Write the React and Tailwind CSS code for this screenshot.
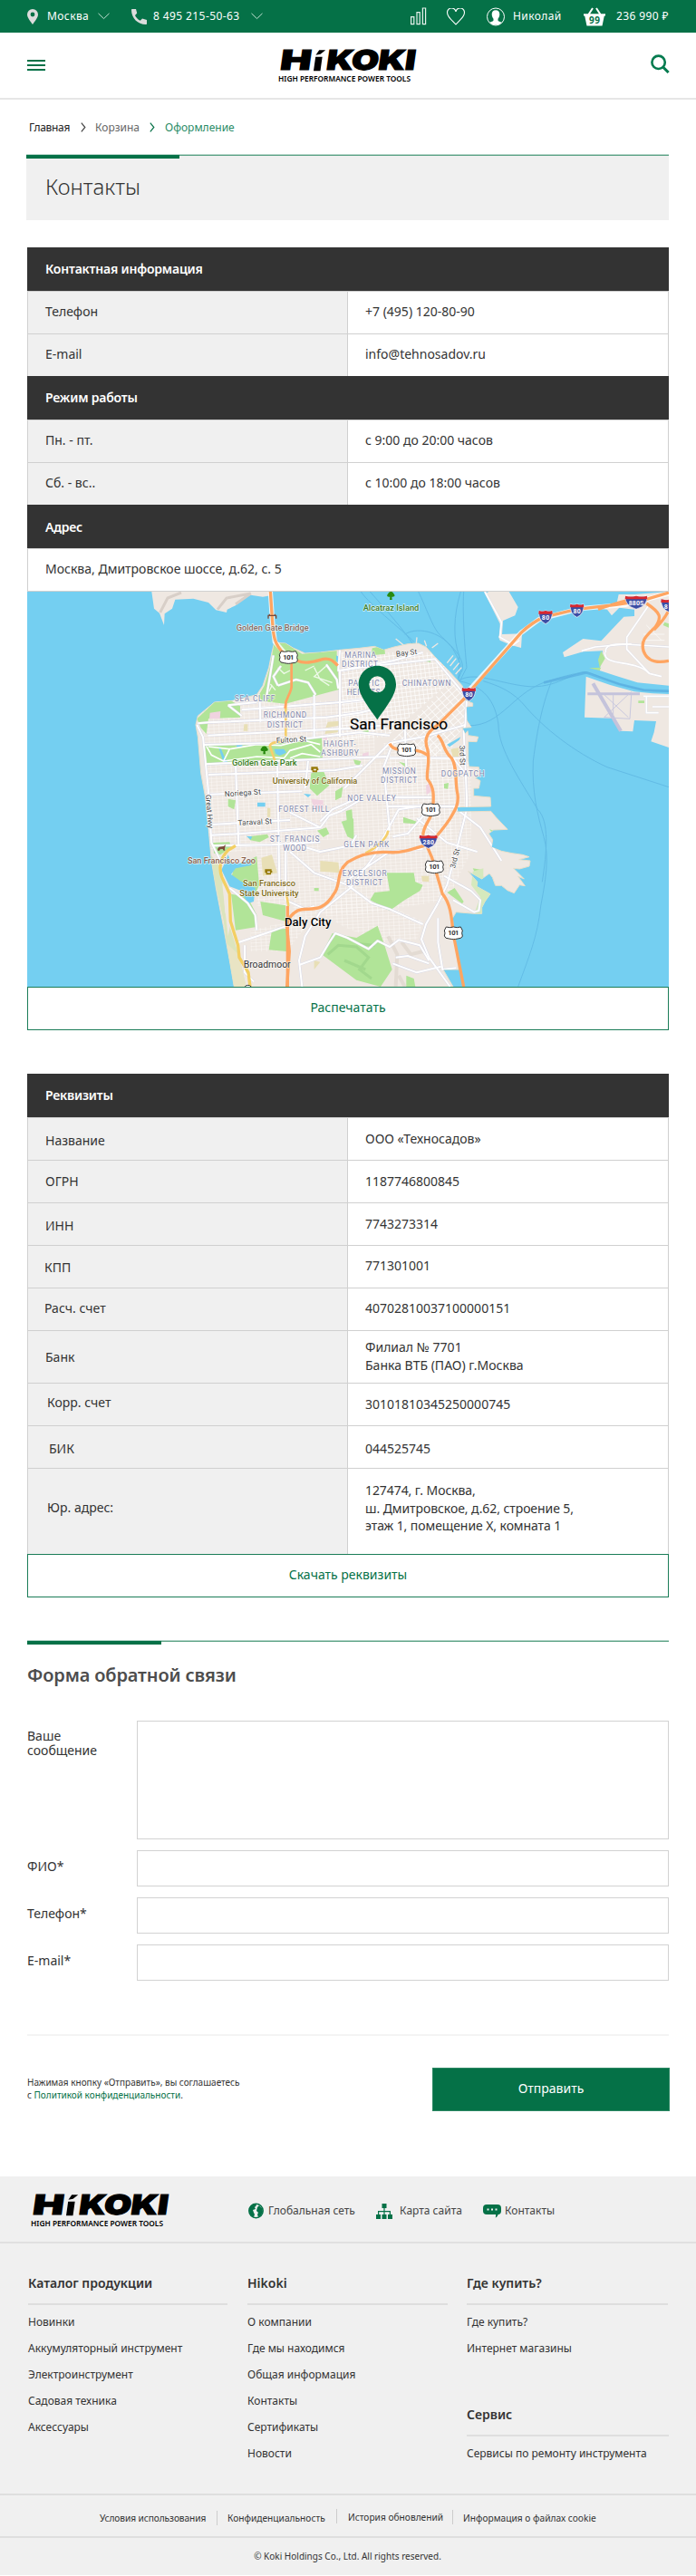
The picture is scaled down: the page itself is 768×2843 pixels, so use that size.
import React from 'react';

const FONT = "font-['Noto_Sans',sans-serif]";

function Logo() {
  return (
    <svg width="154" height="38" viewBox="0 0 154 38" className="block overflow-visible">
      <g transform="translate(1 24.3) skewX(-8)">
        <text y="-1" fontFamily="Inter, sans-serif" fontWeight="900" fontSize="30" stroke="#000" strokeWidth="1.2">
          <tspan x="0" textLength="34" lengthAdjust="spacingAndGlyphs">H</tspan>
        </text>
        <path d="M38 0 38 -15.500 45.500 -15.500 45.500 0ZM38 -17.500 41 -23 48 -23 43 -18.500Z" />
        <text y="-1" fontFamily="Inter, sans-serif" fontWeight="900" fontSize="30" stroke="#000" strokeWidth="1.2">
          <tspan x="51" textLength="98" lengthAdjust="spacingAndGlyphs">KOKI</tspan>
        </text>
      </g>
      <text x="0" y="36.2" fontFamily="Noto Sans, sans-serif" fontWeight="600" fontSize="8.6" textLength="146" lengthAdjust="spacingAndGlyphs">
        HIGH PERFORMANCE POWER TOOLS
      </text>
    </svg>
  );
}

function Chevron() {
  return (
    <svg width="13" height="8" viewBox="0 0 13 8" className="block" fill="none" stroke="#bfe0d2" strokeWidth="1">
      <path d="M.5 .8 6.5 6.6 12.5 .8" />
    </svg>
  );
}

function TopBar() {
  return (
    <div className="flex h-9 items-center bg-[#057147] pr-[30px] pl-[30px] text-xs tracking-[0.4px] text-white">
      <svg width="12" height="17" viewBox="0 0 12 17" className="block" fill="#dcdcdc">
        <path fillRule="evenodd" d="M6 0a6 6 0 0 1 6 6c0 3.500-3.600 7.500-6 11C3.600 13.500 0 9.500 0 6a6 6 0 0 1 6-6Zm0 3.600a2.400 2.400 0 1 0 0 4.800 2.400 2.400 0 0 0 0-4.800Z" />
      </svg>
      <span className="ml-[10px] w-14">Москва</span>
      <Chevron />
      <svg width="17" height="17" viewBox="0 0 17 17" className="ml-6 block" fill="#dcdcdc">
        <path d="M1 0h4l1.200 4.500L4 7c1.200 2.500 3 4.500 5.800 5.800L12 10.600l5 1.400v4c0 .6-.4 1-1 1C7 17 0 10 0 1c0-.6.4-1 1-1Z" />
      </svg>
      <span className="ml-[7px] w-[108px] whitespace-nowrap">8 495 215-50-63</span>
      <Chevron />
      <div className="ml-auto flex items-center">
        <svg width="18" height="20" viewBox="0 0 18 20" className="block" fill="none" stroke="#e6f1ec" strokeWidth="1.200">
          <path d="M.6 10.600h3.200v8H.6zM7 5.600h3.200v13H7zM13.400 1h3.200v17.600h-3.200z" />
        </svg>
        <svg width="20" height="19" viewBox="0 0 20 19" className="ml-[22px] block" fill="none" stroke="#fff" strokeWidth="1.100">
          <path d="M10 18C6 13.500 .6 9.500 .6 5.400A4.700 4.700 0 0 1 10 3.800 4.700 4.700 0 0 1 19.400 5.400C19.400 9.500 14 13.500 10 18Z" />
        </svg>
        <svg width="20" height="21" viewBox="0 0 20 21" className="ml-6 block">
          <circle cx="10" cy="10.500" r="9.500" fill="none" stroke="#fff" />
          <path fill="#fff" d="M10 3.200c3 0 4.300 2 4.300 4.600 0 2.200-.8 3.800-1.800 4.900v1.700c0 1 3.200 1.400 4 2.500A9 9 0 0 1 10 19.600a9 9 0 0 1-6.500-2.700c.8-1.100 4-1.500 4-2.500v-1.700c-1-1.100-1.800-2.700-1.800-4.900 0-2.600 1.300-4.600 4.300-4.600Z" />
        </svg>
        <span className="ml-[9px] w-[78px]">Николай</span>
        <svg width="24" height="21" viewBox="0 0 24 21" className="block">
          <path d="M5.500 8 10 1M18.500 8 14 1" stroke="#fff" strokeWidth="2" fill="none" />
          <path fill="#fff" d="M0 7.200h24v2.200h-1.200L20.500 20.500h-17L1.200 9.400H0z" />
          <text x="12.200" y="17.600" textAnchor="middle" fontFamily="Noto Sans, sans-serif" fontWeight="700" fontSize="10" fill="#057147">99</text>
        </svg>
        <span className="ml-3 w-[58px] whitespace-nowrap">236 990 ₽</span>
      </div>
    </div>
  );
}

function Header() {
  return (
    <div className="flex h-[74px] items-start justify-between border-b-2 border-[#e6e6e6] pr-[29px] pl-[30px]">
      <div className="mt-[30px] flex w-[20px] flex-col gap-[3px]">
        <div className="h-[2px] bg-[#057147]" />
        <div className="h-[2px] bg-[#057147]" />
        <div className="h-[2px] bg-[#057147]" />
      </div>
      <div className="mt-[18px]"><Logo /></div>
      <svg width="21" height="21" viewBox="0 0 21 21" className="mt-6 block" fill="none" stroke="#057b4f" strokeWidth="2.600">
        <circle cx="8.600" cy="8.800" r="7.200" />
        <path d="m13.600 14 6 6" strokeWidth="3" />
      </svg>
    </div>
  );
}

function Crumb({ color }) {
  return (
    <svg width="6" height="11" viewBox="0 0 6 11" className={'block ' + color} fill="none" stroke="currentColor" strokeWidth="1.200">
      <path d="m.8 .6 4 4.900-4 4.900" />
    </svg>
  );
}

function Accent({ bar }) {
  return (
    <div className="h-[5px] bg-[linear-gradient(#b4d5c8_0_1px,#5aa184_1px_2px,transparent_2px)]">
      <div className={'relative top-px h-[4px] bg-[#057147] ' + bar} />
    </div>
  );
}

function Dark({ children, pb = 'pb-px' }) {
  return (
    <div className={'flex h-12 items-center bg-[#333] pl-5 text-sm font-semibold tracking-[-0.2px] text-white ' + pb}>{children}</div>
  );
}

function Row({ label, children }) {
  return (
    <div className="flex h-[47px] border-x border-t border-[#d0d0d0] text-sm leading-5">
      <div className="flex w-[353px] items-center border-r border-[#d0d0d0] bg-[#f0f0f0] pb-[2px] pl-[19px]">{label}</div>
      <div className="flex items-center pb-[2px] pl-[19px]">{children}</div>
    </div>
  );
}

function Outline({ children, nudge }) {
  return (
    <button className={'flex h-12 w-full items-center justify-center border border-[#1a7c57] text-sm text-[#057147] ' + nudge}>{children}</button>
  );
}

const requisites = [
  { h: 'h-[47px]', l: 'Название', lp: 'pl-[19px] pt-[15px]', v: ['ООО «Техносадов»'], vp: 'pt-[13px]' },
  { h: 'h-[47px]', l: 'ОГРН', lp: 'pl-[19px] pt-[13px]', v: ['1187746800845'], vp: 'pt-[13px]' },
  { h: 'h-[47px]', l: 'ИНН', lp: 'pl-[19px] pt-[15px]', v: ['7743273314'], vp: 'pt-[13px]' },
  { h: 'h-[47px]', l: 'КПП', lp: 'pl-[18px] pt-[14px]', v: ['771301001'], vp: 'pt-[12px]' },
  { h: 'h-[47px]', l: 'Расч. счет', lp: 'pl-[18px] pt-[12px]', v: ['40702810037100000151'], vp: 'pt-[12px]' },
  { h: 'h-[58px]', l: 'Банк', lp: 'pl-[19px] pt-[19px]', v: ['Филиал № 7701', 'Банка ВТБ (ПАО) г.Москва'], vp: 'pt-[8px]' },
  { h: 'h-[47px]', l: 'Корр. счет', lp: 'pl-[21px] pt-[11px]', v: ['30101810345250000745'], vp: 'pt-[13px]' },
  { h: 'h-[47px]', l: 'БИК', lp: 'pl-[23px] pt-[15px]', v: ['044525745'], vp: 'pt-[15px]' },
  { h: 'h-[95px]', l: 'Юр. адрес:', lp: 'pl-[21px] pt-[33px]', v: ['127474, г. Москва,', 'ш. Дмитровское, д.62, строение 5,', 'этаж 1, помещение X, комната 1'], vp: 'pt-[14px] tracking-[-0.08px]' },
];

/* Map drawing: the view box is three units per pixel. */
const LAND =
  'M908 208 945 210 970 225 1010 243 1060 240 1125 232 1190 226 1240 220 1270 232 1305 222 1350 212 1385 210 1410 222 1440 255 1480 295 1512 330 1530 350 1542 400 1565 408 1565 418 1543 420 1545 465 1560 488 1530 490 1540 510 1548 500 1550 515 1583 520 1578 536 1550 535 1550 560 1550 600 1552 618 1585 620 1590 648 1572 655 1590 665 1585 690 1568 690 1568 715 1623 720 1625 750 1512 752 1515 768 1625 766 1642 786 1680 826 1634 828 1618 840 1631 860 1627 885 1660 898 1695 905 1730 910 1752 917 1718 926 1755 930 1752 948 1720 957 1700 955 1735 990 1715 982 1738 1013 1720 1010 1702 1037 1680 1028 1660 1012 1640 1012 1630 985 1620 972 1595 990 1550 965 1580 1000 1578 1015 1623 1040 1605 1065 1595 1085 1595 1105 1570 1105 1510 1100 1498 1120 1505 1190 1518 1290 1467 1290 1500 1347 775 1347 760 1260 740 1150 715 1020 700 930 690 820 680 720 665 640 655 520 648 480 655 450 710 405 770 400 850 380 870 350 890 290 900 240Z';

const WATER_LINES = [
  'M1195 39C1220 80 1360 190 1370 205', 'M1225 39C1270 90 1340 170 1365 210', 'M1385 39C1410 90 1430 150 1450 175C1480 210 1540 250 1530 300L1515 325',
  'M1525 39C1500 120 1500 200 1520 250L1518 330', 'M1535 39C1530 120 1540 240 1545 290L1522 335', 'M1340 180C1390 150 1470 180 1500 230S1530 300 1518 328',
  'M1515 335C1570 300 1640 340 1740 352S1900 300 1940 305S2060 370 2214 370', 'M1530 480C1650 500 1690 380 1800 340C1860 320 1900 310 1940 305',
  'M1600 335C1650 350 1700 370 1740 420C1800 490 1900 570 2010 620L2214 686', 'M1520 335C1600 350 1640 400 1650 480C1650 560 1720 660 1780 760C1820 800 1810 900 1795 1000',
  'M1825 338C1800 400 1780 480 1765 600C1760 700 1780 780 1800 850S1805 1000 1790 1080C1780 1180 1750 1250 1715 1347',
];

const PARKS = [
  'M908 208 945 210 1000 245 1115 235 1115 270 1125 362 1040 385 945 410 870 402 855 385 875 350 893 290Z',
  'M652 460 710 405 760 397 795 418 795 455 690 460 683 510 665 490Z',
  'M675 546 905 540 1065 520 1068 590 910 596 680 608Z',
  'M1232 226 1272 218 1275 245 1230 250Z', 'M1030 640 1070 630 1090 680 1050 715 1025 690Z', 'M1170 595 1195 600 1190 615 1175 610Z',
  'M705 870 760 868 765 885 730 910 708 905Z', 'M775 950 850 915 858 1010 845 1040 800 1030 760 1010Z', 'M765 1040 820 1050 850 1110 845 1150 780 1160Z',
  'M862 1065 945 1078 945 1130 870 1110Z', 'M900 1158 948 1155 948 1230 890 1225Z', 'M1130 800 1170 790 1172 860 1150 850Z', 'M1050 830 1080 820 1090 840 1070 852Z',
  'M1065 1240 1100 1170 1180 1185 1250 1145 1270 1200 1298 1290 1260 1347 1180 1325Z', 'M1280 970 1370 970 1375 1000 1400 1010 1390 1030 1340 1060 1290 1095 1225 1060 1240 1035 1290 1030Z',
  'M1480 1035 1505 1020 1535 1065 1530 1072Z', 'M1620 825 1672 848 1635 846Z', 'M1335 785 1380 800 1375 808 1335 805Z', 'M1145 765 1165 760 1170 830 1150 820Z',
  'M1110 700 1135 685 1130 720 1110 730Z', 'M1345 1310 1370 1320 1375 1347 1345 1347Z', 'M1410 270 1425 260 1425 272Z', 'M1470 675 1485 672 1483 692 1470 690Z', 'M755 725 780 730 775 760 755 750Z',
  'M1565 955 1595 960 1600 985 1575 975Z', 'M820 850 885 842 890 852 860 868 828 862Z', 'M1200 500 1220 498 1220 510 1200 510Z', 'M1320 602 1345 608 1340 618Z', 'M1040 1020 1055 1020 1055 1030 1040 1030Z',
];

const ROADS = [
  'M655 475 690 472 1080 455 1190 440 1270 420', 'M652 480 672 520 690 700 700 870 735 940', 'M688 515 1190 490 1280 480', 'M672 546 900 540 1060 520 1190 505 1290 515', 'M680 610 900 600 1280 585',
  'M690 645 1110 630 1200 615', 'M695 710 1000 700', 'M700 810 960 795', 'M700 845 800 840 1060 820', 'M705 880 900 877 1060 868', 'M780 610 790 880', 'M918 600 925 1010', 'M946 880 945 1060', 'M1020 600 1010 690',
  'M860 400 862 470', 'M1040 380 1040 520', 'M1125 300 1125 520', 'M800 430 1130 405 1300 385', 'M1130 300 1300 268 1400 240', 'M1125 232 1120 300 1190 290 1440 262',
  'M1440 262 1530 370 1545 395 1540 480 1535 500 1545 720 1545 760 1520 860 1480 1010 1450 1070', 'M1540 480 1400 520 1290 540', 'M1290 540 1190 640 1140 690', 'M1300 540 1270 620 1290 830',
  'M1340 480 1345 620', 'M1280 750 1520 750', 'M1280 720 1430 720', 'M1290 590 1530 590', 'M1500 590 1540 640', 'M945 1060 1010 1090 1040 1080', 'M790 1200 880 1170 950 1145', 'M810 1210 810 1300 840 1330',
  'M850 1160 845 1110 820 1070 760 1020', 'M1000 1347 990 1260 1010 1180 1060 1100 1160 1020 1250 900', 'M960 900 1040 970 1150 1010 1230 1070 1290 1090 1400 1140', 'M1450 1070 1410 1140 1395 1190 1420 1250 1490 1347',
  'M990 1275 1060 1250 1090 1200 1110 1170 1150 1185 1220 1222 1250 1195 1290 1215 1320 1192 1390 1210 1420 1260', 'M1060 800 1100 760 1190 720', 'M960 770 1060 820 1090 780 1130 765 1190 730',
  'M1140 1000 1290 900 1400 890', 'M1240 905 1320 760 1420 745', 'M1470 980 1560 1030 1590 1060 1585 1095 1570 1100 1500 1060', 'M1500 750 1590 820 1660 930', 'M1380 790 1480 870 1580 900', 'M1300 850 1350 840 1420 760',
  'M1300 1270 1380 1300 1460 1280', 'M1310 1250 1350 1245 1420 1270', 'M1450 1120 1450 1200 1465 1290 1510 1285', 'M755 415 800 450M755 415 850 405', 'M920 350 980 330 1020 340 1045 380', 'M905 250 890 340 880 400', 'M930 285 905 320 920 350', 'M1080 280 1115 330 1120 360', 'M1180 845 1160 880 1060 900 1010 885 960 870',
];
const EAST_ROADS = [
  'M1925 235 1970 222 2070 213 2214 222', 'M2150 80 2075 190 2075 230 2150 310', 'M2002 240C2000 290 2100 260 2150 310L2190 320', 'M2005 240C2000 205 2060 215 2090 212', 'M1605 39 1660 140 1655 190 1700 215 1720 200', 'M2130 385 2214 385M2140 385V440H2180M2160 420H2214',
];

function Shield({ x, y, t }) {
  return (
    <g transform={`translate(${x} ${y})`}>
      <path d="M-24-20Q-12-16 0-20Q12-16 24-20L30-8Q26 0 30 10Q28 19 14 19Q6 21 0 21Q-6 21-14 19Q-28 19-30 10Q-26 0-30-8Z" fill="#fff" stroke="#333" strokeWidth="3" />
      <text y="8" textAnchor="middle" fontFamily="Roboto, sans-serif" fontWeight="700" fontSize="23" textLength="36" fill="#333">{t}</text>
    </g>
  );
}

function Interstate({ x, y, t, w = 22, dx = 0 }) {
  return (
    <g transform={`translate(${x} ${y})`}>
      <path d={`M${-w} -20Q${-w / 2} -15 0 -20Q${w / 2} -15 ${w} -20Q${w + 3} 12 0 24Q${-w - 3} 12 ${-w} -20Z`} fill="#3c4ea5" stroke="#fff" strokeWidth="2" />
      <path d={`M${-w} -20Q${-w / 2} -15 0 -20Q${w / 2} -15 ${w} -20L${w + 1} -9H${-w - 1}Z`} fill="#d8282f" />
      <text x={dx} y="11" textAnchor="middle" fontFamily="Roboto, sans-serif" fontWeight="700" fontSize="21" textLength={t.length * 12.5} fill="#fff">{t}</text>
    </g>
  );
}

/* [text, left, baseline, width, size, colour, weight] */
const LABELS = [
  ['Golden Gate Bridge', 782, 168, 240, 28, '#866a60', 500], ['Alcatraz Island', 1202, 101, 185, 27, '#3a7d28', 500],
  ['SEA CLIFF', 776, 402, 134, 25, '#7f86ab', 400], ['RICHMOND', 872, 457, 143, 25, '#7f86ab', 400], ['DISTRICT', 884, 488, 118, 25, '#7f86ab', 400],
  ['MARINA', 1141, 258, 104, 25, '#7f86ab', 400], ['DISTRICT', 1131, 288, 120, 25, '#7f86ab', 400], ['PACIFIC', 1153, 350, 103, 25, '#7f86ab', 400], ['HEIGHTS', 1148, 380, 110, 25, '#7f86ab', 400],
  ['CHINATOWN', 1331, 350, 161, 25, '#7f86ab', 400], ['HAIGHT-', 1070, 552, 108, 25, '#7f86ab', 400], ['ASHBURY', 1063, 582, 124, 25, '#7f86ab', 400],
  ['MISSION', 1266, 642, 110, 25, '#7f86ab', 400], ['DISTRICT', 1260, 672, 121, 25, '#7f86ab', 400], ['DOGPATCH', 1460, 650, 144, 25, '#7f86ab', 400], ['NOE VALLEY', 1150, 731, 160, 25, '#7f86ab', 400],
  ['FOREST HILL', 922, 768, 168, 25, '#7f86ab', 400], ['ST. FRANCIS', 893, 868, 164, 25, '#7f86ab', 400], ['WOOD', 937, 898, 77, 25, '#7f86ab', 400], ['GLEN PARK', 1138, 886, 150, 25, '#7f86ab', 400],
  ['EXCELSIOR', 1133, 982, 147, 25, '#7f86ab', 400], ['DISTRICT', 1146, 1012, 120, 25, '#7f86ab', 400],
  ['Golden Gate Park', 768, 614, 215, 28, '#387d20', 500], ['University of California', 902, 674, 281, 28, '#806a14', 500], ['San Francisco Zoo', 621, 938, 225, 28, '#8a604c', 500],
  ['San Francisco', 804, 1013, 174, 27, '#806a14', 500], ['State University', 793, 1048, 196, 27, '#806a14', 500], ['Broadmoor', 806, 1284, 156, 30, '#333', 400],
  ['Daly City', 942, 1145, 154, 38, '#000', 500],
];
const STREETS = [['Fulton St', 915, 540, 100, -3], ['Noriega St', 744, 718, 120, -4], ['Taraval St', 788, 813, 113, -3], ['Bay St', 1312, 254, 70, -7], ['Great Hwy', 680, 712, 112, 85], ['3rd St', 1521, 548, 66, 88], ['3rd St', 1506, 956, 66, -76]];

function SmallMark({ x, y, c }) {
  return (
    <g transform={`translate(${x} ${y})`} fill={c}>
      <path d="M-12-8H10V-3H12V4H8V10H-8V4H-12Z" />
      <path d="M-4-1H5V4H-4Z" fill="#efe8df" />
    </g>
  );
}

function Tree({ x, y }) {
  return <path transform={`translate(${x} ${y})`} fill="#288a10" d="M-12 2C-14-4-8-6-7-10 -2-14 4-13 7-10 8-6 14-4 12 2 8 5 4 4 3 4L4 14H-4L-3 4C-6 4-10 5-12 2Z" />;
}

function CityMap() {
  return (
    <svg width="708" height="436" viewBox="90 39 2124 1308" preserveAspectRatio="none" className="block">
      <defs>
        <pattern id="grid" width="17" height="11" patternUnits="userSpaceOnUse" patternTransform="rotate(-3)">
          <path d="M0 0H17M0 0V11" stroke="#fdfcfa" strokeWidth="2.600" fill="none" />
        </pattern>
        <pattern id="dense" width="14" height="14" patternUnits="userSpaceOnUse" patternTransform="rotate(-7)">
          <path d="M0 0H14M0 0V14" stroke="#fff" strokeWidth="4" fill="none" />
        </pattern>
        <pattern id="diag" width="22" height="16" patternUnits="userSpaceOnUse" patternTransform="rotate(-42)">
          <path d="M0 0H22M0 0V16" stroke="#fff" strokeWidth="4.500" fill="none" />
        </pattern>
        <clipPath id="land"><path d={LAND} /></clipPath>
      </defs>
      <rect x="90" y="39" width="2124" height="1308" fill="#74cff1" />
      <g fill="none" stroke="#5db5e2" strokeWidth="3" opacity=".75">
        {WATER_LINES.map((d) => <path key={d} d={d} />)}
      </g>
      <path d="M1800 340 1940 307 2050 345 2130 365 2214 368" fill="none" stroke="#58ade0" strokeWidth="8" opacity=".7" />
      <g fill="#efe8e2">
        <path d="M502 39 510 95 528 110 543 150 545 112 570 95 580 65 640 62 690 75 715 100 750 108 752 98 780 85 800 62 830 50 870 56 895 52 895 39Z" />
        <path d="M1605 45 1618 39 1685 39 1715 90 1705 118 1665 135 1662 180 1728 178 1725 225 1690 215 1655 200 1650 188 1657 178 1655 145Z" />
        <path d="M1863 240 1885 225 1930 195 1990 202 2065 122 2100 120 2100 98 2050 92 2025 118 2010 98 1980 95 2040 85 2048 48 2100 48 2214 39 2214 350 2110 340 2040 318 1985 300 1995 235 1930 238 1868 256Z" />
        <path d="M1940 320 2020 348 2100 370 2160 376 2214 378V555L2155 535 2165 505 2172 468 2100 465 2095 502 2055 500 2025 458 1935 455Z" />
        <path d={LAND} stroke="#e8dfca" strokeWidth="3" />
      </g>
      <path d="M530 108 555 60 600 42M720 98 750 60 830 45 780 80" stroke="#d8cfc8" strokeWidth="9" fill="none" />
      <g clipPath="url(#land)">
        <path d="M670 400H1240V860H1060V1000H960V1080H850V900H690ZM1190 600H1560V900L1480 1060 1180 1110 1050 1100 950 1230 830 1230V1160L960 1130 1000 950 1190 850Z" fill="url(#grid)" />
        <path d="M1130 240H1440L1500 330 1280 520 1130 530Z" fill="url(#dense)" />
        <path d="M1500 330 1545 400V480L1430 600 1290 540Z" fill="url(#diag)" />
        <path d="M1270 540H1500V860H1270Z" fill="url(#grid)" />
        <path d="M1060 1100 1180 1030 1400 1130 1380 1190 1270 1200 1140 1150Z" fill="url(#grid)" />
        <path d="M690 900 740 1130 770 1347H815L790 1240 745 1100 735 960Z" fill="#dce4bd" />
        <path d="M735 1190 770 1347 815 1347 790 1240Z" fill="#e9e4c4" />
        <path d="M735 1000 770 1100 755 1180Z" fill="#efe8e2" />
        <g fill="#b1e498">{PARKS.map((d) => <path key={d} d={d} />)}</g>
        <path d="M1085 1240 1120 1210 1180 1215 1220 1250 1190 1290 1230 1320M1190 1205 1240 1210M1140 1260 1210 1290" stroke="#9bd389" strokeWidth="9" fill="none" opacity=".7" />
        <path d="M1285 1180 1315 1240 1310 1347M1330 1200 1360 1240 1400 1230M1320 1310 1340 1347" stroke="#ded6cd" strokeWidth="12" fill="none" opacity=".7" />
        <path d="M1565 965 1600 955 1600 1000 1623 1040 1595 1105H1570L1590 1050 1560 1010Z" fill="#d5e9bd" />
        <path fill="#e8dfb6" d="M1085 470 1125 467 1123 482 1078 490ZM1080 495 1120 492 1118 505 1075 510ZM1060 930 1120 935 1125 970 1060 965ZM865 920 900 910 918 970 870 980ZM808 478 820 478 820 500 806 500ZM1492 560 1520 555 1525 585 1500 590ZM1395 980 1420 980 1420 1000 1398 998ZM885 755 895 755 895 785 885 785ZM1040 1260 1060 1265 1040 1290ZM1150 360 1170 360 1165 370Z" />
        <path fill="#f0d3e0" d="M695 440 730 435 728 460 693 460ZM1030 725 1070 730 1070 755 1040 760ZM1410 680 1425 670 1428 700 1412 712ZM1070 515 1083 515 1083 530 1070 530ZM1200 575 1220 570 1220 582 1200 585Z" />
        <g fill="#74cff1">
          <path d="M733 960 745 935 755 910 765 935 790 940 830 925 832 945 780 955 765 975 800 1000 845 1020 840 1065 820 1072 800 1030 760 1015Z" />
          <path d="M852 737H878V751H852ZM780 543 805 543 800 553 785 555ZM908 560 940 560 948 572 925 582 912 575ZM722 550 732 560 745 590 755 605 740 605ZM1113 250 1122 255 1120 275 1113 268ZM1005 708 1030 710 1020 720ZM815 848 835 850 830 860ZM1480 545 1525 520 1520 530 1488 553Z" />
        </g>
        <path d="M683 550 700 580 740 600 760 560 690 552M760 560 850 545 930 548 1000 530 1060 545M740 600 850 585 940 590 960 565 1030 545 1060 570M960 590 1000 575 1060 585" stroke="#fff" strokeWidth="5" fill="none" />
        <path d="M920 290 940 310 960 300M1040 290 1060 330 1090 350M1080 285 1040 320 1100 340M1010 300 1040 285M890 370 900 350 912 365 895 345" stroke="#eef9e8" strokeWidth="4" fill="none" />
        <g fill="none" strokeLinejoin="round">
          <g stroke="#d5d7e6" strokeWidth="8.500">{ROADS.map((d) => <path key={d} d={d} />)}</g>
          <g stroke="#fff" strokeWidth="6">{ROADS.map((d) => <path key={d} d={d} />)}</g>
        </g>
        <path d="M780 880 755 895C725 925 725 960 735 985L760 1040 763 1130 788 1210 792 1250 822 1300 828 1347" stroke="#f3cf63" strokeWidth="10" fill="none" />
        <path d="M946 400V520M946 525C925 545 900 530 893 550L910 598M946 1030 955 1080M1285 830C1280 860 1240 890 1210 905" stroke="#f5cf6c" strokeWidth="8" fill="none" />
      </g>
      <g fill="#b1e498">
        <path d="M1990 235 2003 260 1985 290 1980 265ZM1950 292 1990 290 1985 300ZM2113 400H2133V408H2113ZM2200 140 2214 145V158L2195 150Z" />
      </g>
      <g fill="none" strokeLinejoin="round">
        <g stroke="#dcdde8" strokeWidth="7">{EAST_ROADS.map((d) => <path key={d} d={d} />)}</g>
        <g stroke="#fff" strokeWidth="5">{EAST_ROADS.map((d) => <path key={d} d={d} />)}</g>
        <path d="M2150 170 2200 120M2140 150 2190 200M2130 180H2200M2125 200H2200" stroke="#fff" strokeWidth="2" />
        <path d="M1500 250 1480 275M1510 260 1490 285M1520 275 1500 298M1528 290 1508 312M1310 195 1335 215M1380 190 1378 212M1405 200 1412 220M1430 225 1450 210" stroke="#efe8e2" strokeWidth="4" />
      </g>
      <path d="M1945 377H2118" stroke="#c4c3db" strokeWidth="9" />
      <path d="M1963 343 2055 500" stroke="#c4c3db" strokeWidth="12" />
      <path d="M2090 380 2085 460 2000 455 2090 370M2000 380 2080 455M2030 380V450" fill="none" stroke="#c9c8de" strokeWidth="3" />
      <path fill="none" stroke="#fff" strokeWidth="16" opacity=".8" d="M895 39 902 140 910 205 940 240M1535 385 1725 175 1785 130 1920 95 2070 82 2214 45" />
      <g fill="none" stroke="#ffa561" strokeLinejoin="round" strokeWidth="10">
        <path d="M895 39 902 140C905 180 905 210 940 245M985 268C1010 280 1040 270 1070 262C1095 258 1105 270 1118 284" />
        <path d="M965 275 965 355C960 385 943 390 944 425" strokeWidth="8" />
        <path d="M1552 375 1565 358 1725 175C1745 155 1780 130 1806 122L1910 97 2040 82 2120 70 2214 42M1980 97C2020 85 2050 72 2090 66" />
        <path d="M2140 78C2190 110 2190 125 2170 155C2140 185 2120 200 2130 235C2145 275 2180 275 2214 268M2214 100C2200 130 2180 150 2165 165" />
        <path d="M1540 390C1510 420 1480 450 1455 475C1420 500 1400 520 1415 560C1425 600 1410 640 1415 660C1440 690 1435 720 1433 760C1425 800 1400 810 1400 850L1430 920 1465 1040C1490 1070 1495 1110 1500 1170L1535 1347" />
        <path d="M1290 542C1300 565 1320 560 1360 563C1390 565 1400 570 1415 580" />
        <path d="M1448 515C1470 530 1465 565 1495 590C1515 620 1505 670 1515 710C1520 750 1500 770 1490 790C1470 820 1445 850 1420 875C1370 890 1330 905 1290 902C1240 898 1190 910 1150 935C1110 970 1130 1010 1105 1040C1065 1110 1020 1080 985 1095C960 1110 950 1130 950 1150L958 1230 950 1347" />
        <path d="M952 1080V1347" />
      </g>
      <path d="M888 128V118H914V128M892 118V113M910 118V113" stroke="#7b4a38" strokeWidth="4" fill="none" />
      <Tree x={1294} y={52} /><Tree x={875} y={563} />
      <SmallMark x={1042} y={627} c="#977a0b" /><SmallMark x={889} y={966} c="#977a0b" />
      <path d="M720 895 725 888 740 886 747 881 744 893 745 900H740L737 895 729 896 726 901H722Z" transform="translate(0 -4)" fill="#7b4a38" />
      <g fontFamily="Roboto, sans-serif" fontWeight="400" fontSize="25" fill="#444" stroke="#fff" strokeWidth="4" strokeLinejoin="round" paintOrder="stroke">
        {STREETS.map(([t, x, y, w, r]) => (
          <text key={t + y} transform={`translate(${x} ${y}) rotate(${r})`} textLength={w}>{t}</text>
        ))}
      </g>
      <g fontFamily="Roboto, sans-serif" stroke="#ffffff" strokeOpacity=".75" strokeWidth="4" strokeLinejoin="round" paintOrder="stroke">
        {LABELS.map(([t, x, y, w, s, c, f]) => (
          <text key={t + x + y} x={x} y={y} textLength={w} fontSize={s} fill={c} fontWeight={f} lengthAdjust={s > 25 ? 'spacingAndGlyphs' : 'spacing'}>{t}</text>
        ))}
      </g>
      <Shield x={955} y={256} t="101" /><Shield x={1346} y={563} t="101" /><Shield x={1426} y={761} t="101" /><Shield x={1438} y={950} t="101" /><Shield x={1501} y={1169} t="101" />
      <circle cx="821" cy="1356" r="14" fill="#fff" stroke="#333" strokeWidth="3" />
      <Interstate x={1552} y={377} t="80" /><Interstate x={1806} y={122} t="80" /><Interstate x={1910} y={100} t="80" />
      <Interstate x={1418} y={865} t="280" w={29} /><Interstate x={2106} y={73} t="880S" w={36} /><Interstate x={2217} y={84} t="8" w={28} dx={-13} />
      <path fillRule="evenodd" fill="#057147" d="M1249 284C1285 284 1311 312 1311 346C1311 380 1282 415 1249 463C1216 415 1187 380 1187 346C1187 312 1213 284 1249 284ZM1249 319A27 27 0 1 0 1249 373A27 27 0 1 0 1249 319Z" />
      <text x="1158" y="494" textLength="324" lengthAdjust="spacingAndGlyphs" fontSize="48" stroke="#000" strokeWidth=".5" fontFamily="Roboto, sans-serif">San Francisco</text>
    </svg>
  );
}

function Field({ label }) {
  return (
    <div className="flex h-10">
      <label className="w-[121px] pt-[8px] text-sm leading-5">{label}</label>
      <input className="h-10 flex-1 border border-[#d2d2d2]" />
    </div>
  );
}

function FooterCol({ title, items, w = 'w-[221px]' }) {
  return (
    <div className={w}>
      <h3 className="h-[34px] border-b-2 border-[#dedede] text-sm leading-5 font-semibold">{title}</h3>
      <ul className="mt-[4px] text-xs leading-[29px] whitespace-nowrap">
        {items.map((i) => <li key={i}>{i}</li>)}
      </ul>
    </div>
  );
}

function Footer() {
  return (
    <footer className="h-[440px] bg-[#f0f0f0] text-[#333]">
      <div className="flex h-[74px] items-start border-b-2 border-[#e0e0e0] pl-[34px] text-xs text-[#444]">
        <div className="mt-[19px] w-[240px]"><Logo /></div>
        <div className="mt-[29px] flex h-[18px] items-center whitespace-nowrap">
          <svg width="17" height="18" viewBox="0 0 17 18" className="block">
            <circle cx="8.500" cy="9" r="7.700" fill="#f0f0f0" stroke="#057147" strokeWidth="1.500" />
            <path fill="#057147" d="M1 6C2 3 5 1 8 1L9 3 7 5 8 7 5 8 6 11 7 13 6 16C3 15 1 12 1 9ZM10 5 12 3 15 6 16 10 14 14 11 16 10 13 11 11 9 9Z" />
          </svg>
          <span className="ml-[5px] w-[119px]">Глобальная сеть</span>
          <svg width="18" height="17" viewBox="0 0 18 17" className="block" fill="#057147">
            <path d="M6.500 0h5v5h-5zM8.400 5h1.200v3H16v4h-1.200V9.200H9.600V12H8.400V9.200H3.200V12H2V8h6.400zM0 12h5v5H0zM6.500 12h5v5h-5zM13 12h5v5h-5z" />
          </svg>
          <span className="ml-[8px] w-[92px]">Карта сайта</span>
          <svg width="20" height="16" viewBox="0 0 20 16" className="block">
            <path fill="#057147" d="M4 1h12a4 4 0 0 1 4 4v3a4 4 0 0 1-3.400 4c-.3 1.600-1.200 2.800-3 3.500.6-1 .6-2 .4-3.500H4a4 4 0 0 1-4-4V5a4 4 0 0 1 4-4Z" />
            <path fill="#f0f0f0" d="M4.500 5.500h2v2h-2zM9 5.500h2v2H9zM13.500 5.500h2v2h-2z" />
          </svg>
          <span className="ml-[4px]">Контакты</span>
        </div>
      </div>
      <div className="flex h-[278px] border-b-2 border-[#dedede] pt-[34px] pl-[31px]">
        <FooterCol title="Каталог продукции" w="w-[220px]" items={['Новинки', 'Аккумуляторный инструмент', 'Электроинструмент', 'Садовая техника', 'Аксессуары']} />
        <div className="w-[22px]" />
        <FooterCol title="Hikoki" items={['О компании', 'Где мы находимся', 'Общая информация', 'Контакты', 'Сертификаты', 'Новости']} />
        <div className="w-[21px]" />
        <div>
          <FooterCol title="Где купить?" w="w-[222px]" items={['Где купить?', 'Интернет магазины']} />
          <div className="h-[49px]" />
          <FooterCol title="Сервис" w="w-[223px]" items={['Сервисы по ремонту инструмента']} />
        </div>
      </div>
      <div className="flex h-[47px] items-start border-b-2 border-[#dedede] pt-[16px] pl-[110px] text-[10.2px] leading-4 whitespace-nowrap">
        <span className="h-4 w-[129px] pt-px tracking-[-0.1px]">Условия использования</span>
        <span className="mt-px h-4 w-px bg-[#ccc]" />
        <span className="ml-[11px] h-4 w-[120px] pt-px">Конфиденциальность</span>
        <span className="-mt-px h-4 w-px bg-[#ccc]" />
        <span className="ml-3 h-4 w-[115px]">История обновлений</span>
        <span className="h-4 w-px bg-[#ccc]" />
        <span className="ml-[11px] pt-px">Информация о файлах cookie</span>
      </div>
      <p className="pt-[12px] pr-px text-center text-[10px] leading-4">© Koki Holdings Co., Ltd. All rights reserved.</p>
    </footer>
  );
}

export default function App() {
  return (
    <div className={'h-[2843px] w-[768px] overflow-hidden bg-white text-[#333] ' + FONT}>
      <TopBar />
      <Header />
      <nav className="flex h-[60px] items-center pt-px pl-8 text-xs whitespace-nowrap">
        <span className="w-[57px] tracking-[-0.3px] text-[#222]">Главная</span>
        <Crumb color="text-[#444]" />
        <span className="ml-[10px] w-[60px] text-[#666]">Корзина</span>
        <Crumb color="text-[#057147]" />
        <span className="ml-[11px] text-[#2a8b66]">Оформление</span>
      </nav>
      <section className="ml-[29px] w-[709px]">
        <Accent bar="w-[169px]" />
        <div className="-mt-[3px] h-[71px] bg-[linear-gradient(90deg,transparent_169px,#f0f0f0_169px),linear-gradient(transparent_3px,#f0f0f0_3px)] pt-[18px] pl-[21px]">
          <h1 className="text-2xl leading-8 font-light text-[#333]">Контакты</h1>
        </div>
      </section>
      <section className="mt-[30px] ml-[30px] w-[708px]">
        <Dark>Контактная информация</Dark>
        <Row label="Телефон">+7 (495) 120-80-90</Row>
        <Row label="E-mail">info@tehnosadov.ru</Row>
        <Dark>Режим работы</Dark>
        <Row label="Пн. - пт.">с 9:00 до 20:00 часов</Row>
        <Row label="Сб. - вс..">с 10:00 до 18:00 часов</Row>
        <Dark pb="pt-px">Адрес</Dark>
        <div className="flex h-12 items-center border border-[#d0d0d0] pb-[3px] pl-[19px] text-sm">Москва, Дмитровское шоссе, д.62, с. 5</div>
        <CityMap />
        <Outline nudge="pb-[2px]">Распечатать</Outline>
      </section>
      <section className="mt-12 ml-[30px] w-[708px]">
        <Dark>Реквизиты</Dark>
        {requisites.map((r) => (
          <div key={r.l} className={'flex border-x border-t border-[#d0d0d0] text-sm leading-5 ' + r.h}>
            <div className={'w-[353px] border-r border-[#d0d0d0] bg-[#f0f0f0] ' + r.lp}>{r.l}</div>
            <div className={'pl-[19px] leading-[19.500px] ' + r.vp}>
              {r.v.map((t) => <div key={t}>{t}</div>)}
            </div>
          </div>
        ))}
        <Outline nudge="pb-[2px]">Скачать реквизиты</Outline>
      </section>
      <section className="mt-[47px] ml-[30px] w-[708px]">
        <Accent bar="w-[148px]" />
        <h2 className="mt-[20px] text-[20px] leading-7 font-semibold tracking-[-0.15px] text-[#4d4d4d]">Форма обратной связи</h2>
        <div className="mt-[36px] flex flex-col gap-3">
          <div className="flex h-[131px]">
            <label className="w-[121px] pt-[9px] text-sm leading-4">Ваше<br />сообщение</label>
            <textarea className="h-[131px] flex-1 resize-none border border-[#d2d2d2]" />
          </div>
          <Field label="ФИО*" />
          <Field label="Телефон*" />
          <Field label="E-mail*" />
        </div>
        <div className="mt-[59px] h-[2px] bg-[#f4f4f4]" />
        <div className="mt-[35px] flex h-12 w-[709px] justify-between">
          <p className="pt-[9px] text-[10px] leading-[14px]">
            Нажимая кнопку «Отправить», вы соглашаетесь<br />с <a className="text-[#057147]">Политикой конфиденциальности</a>.
          </p>
          <button className="h-12 w-[262px] border border-[#2c8763] bg-[#057147] pb-[2px] text-sm text-white">Отправить</button>
        </div>
      </section>
      <div className="h-[72px]" />
      <Footer />
    </div>
  );
}
